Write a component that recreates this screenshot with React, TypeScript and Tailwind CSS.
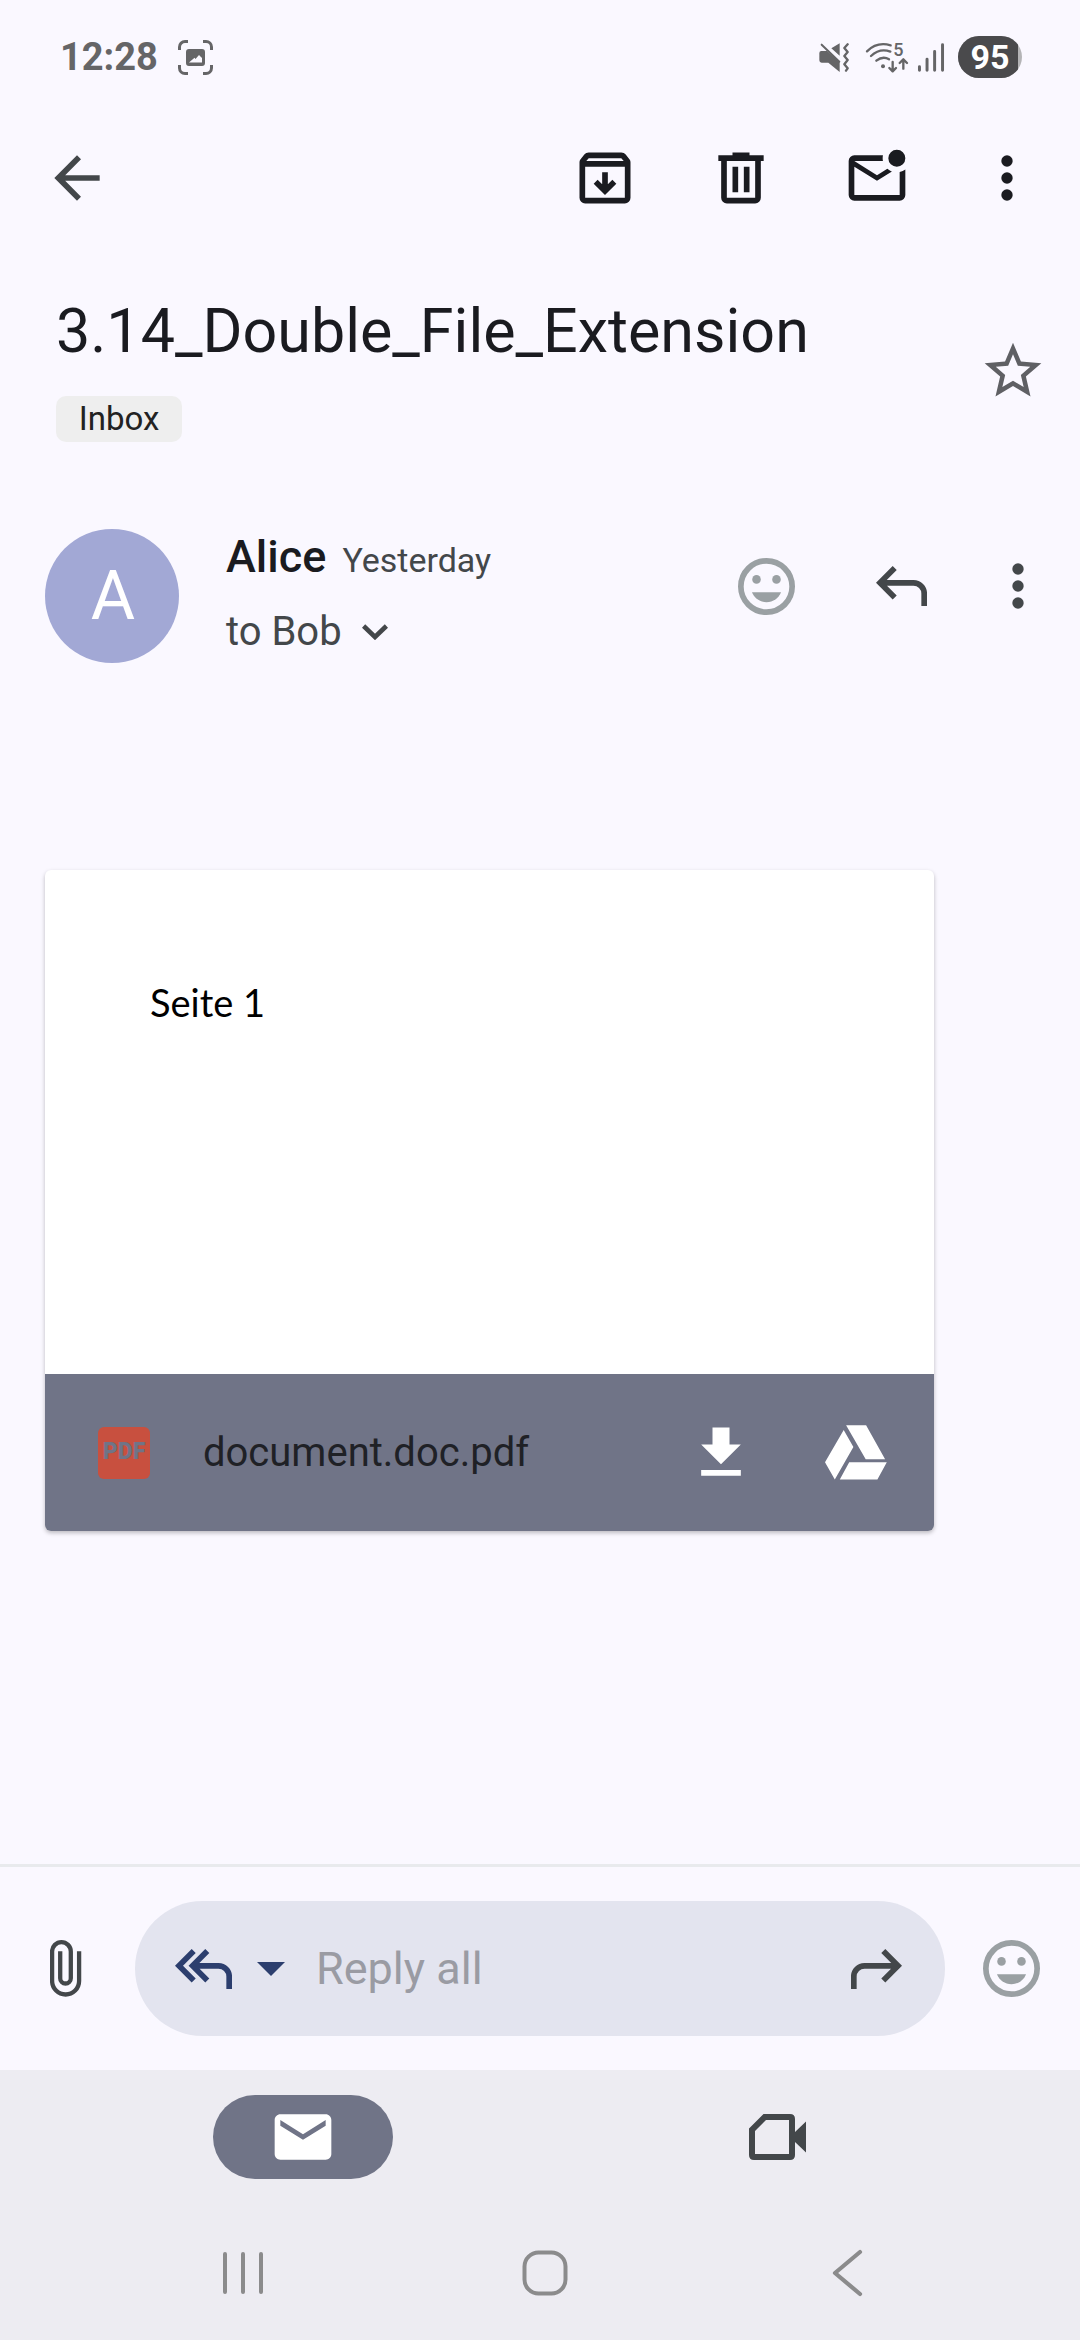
import React from "react";

type IconProps = { className?: string };

function Glyph({ d, className = "size-[68px]" }: { d: string; className?: string }) {
  return (
    <svg viewBox="0 0 24 24" fill="currentColor" className={className} aria-hidden="true">
      <path d={d} />
    </svg>
  );
}

const ARROW_BACK = "M20 11H7.83l5.59-5.59L12 4l-8 8 8 8 1.41-1.41L7.83 13H20v-2z";
const ARCHIVE =
  "M12 18l4-4-1.4-1.4-1.6 1.6V10h-2v4.2l-1.6-1.6L8 14l4 4ZM5 8v11h14V8H5ZM5 21q-.825 0-1.413-.588T3 19V6.525q0-.35.113-.675t.337-.6L4.7 3.725q.275-.35.687-.538T6.25 3h11.5q.45 0 .863.188t.687.537l1.25 1.525q.225.275.337.6t.113.675V19q0 .825-.588 1.413T19 21H5ZM5.4 6h13.2l-.85-1H6.25L5.4 6Z";
const TRASH =
  "M7 21q-.825 0-1.412-.587Q5 19.825 5 19V6H4V4h5V3h6v1h5v2h-1v13q0 .825-.587 1.413Q17.825 21 17 21ZM17 6H7v13h10ZM9 17h2V8H9Zm4 0h2V8h-2Z";
const MAIL_UNREAD =
  "M4 20q-.825 0-1.413-.588T2 18V6q0-.825.588-1.413T4 4h10.1q-.1.5-.1 1t.1 1H4l8 5 3.65-2.275q.35.325.763.563.412.237.862.412L12 13 4 8v10h16V9.9q.575-.125 1.075-.35T22 9v9q0 .825-.588 1.413T20 20H4ZM19 8q-1.25 0-2.125-.875T16 5q0-1.25.875-2.125T19 2q1.25 0 2.125.875T22 5q0 1.25-.875 2.125T19 8Z";
const STAR =
  "M22 9.24l-7.19-.62L12 2 9.19 8.63 2 9.24l5.46 4.73L5.82 21 12 17.27 18.18 21l-1.63-7.03L22 9.24zM12 15.4l-3.76 2.27 1-4.28-3.32-2.88 4.38-.38L12 6.1l1.71 4.04 4.38.38-3.32 2.88 1 4.28L12 15.4z";
const DOWNLOAD = "M19 9h-4V3H9v6H5l7 7 7-7zM5 18v2h14v-2H5z";
const MAIL = "M20 4H4c-1.1 0-2 .9-2 2v12c0 1.1.9 2 2 2h16c1.1 0 2-.9 2-2V6c0-1.1-.9-2-2-2zm0 4l-8 5-8-5V6l8 5 8-5v2z";

function Dots() {
  return (
    <svg viewBox="8 0 8 24" fill="currentColor" className="h-[68px] w-6" aria-hidden="true">
      <circle cx="12" cy="6" r="2" />
      <circle cx="12" cy="12" r="2" />
      <circle cx="12" cy="18" r="2" />
    </svg>
  );
}

function Smiley() {
  return (
    <svg viewBox="2 2 20 20" fill="currentColor" className="size-[57px] text-[#9aa0a3]" aria-hidden="true">
      <circle cx="12" cy="12" r="9" fill="none" stroke="currentColor" strokeWidth="2" />
      <circle cx="8.5" cy="9.5" r="1.5" />
      <circle cx="15.5" cy="9.5" r="1.5" />
      <path d="M12 17.5c2.33 0 4.31-1.46 5.11-3.5H6.89c.8 2.04 2.78 3.5 5.11 3.5z" />
    </svg>
  );
}

function ReplyArrow({ className = "" }: IconProps) {
  return (
    <svg viewBox="0 0 51 40" fill="none" stroke="currentColor" strokeWidth="5.7" className={`h-10 w-[51px] ${className}`} aria-hidden="true">
      <path d="M18.7 2 4 16.8l14.7 14.7M4 16.8h33.5a10.7 10.7 0 0 1 10.7 10.7V40" />
    </svg>
  );
}

function ReplyAllArrow() {
  return (
    <svg viewBox="0 0 57 40" fill="none" stroke="currentColor" strokeWidth="5.7" className="h-10 w-[57px]" aria-hidden="true">
      <path d="M18.7 2 4 16.8l14.7 14.7M32.3 2 17.6 16.8l14.7 14.7M17.6 16.8h25.9a10.7 10.7 0 0 1 10.7 10.7V40" />
    </svg>
  );
}

function CaptureIcon() {
  return (
    <svg viewBox="0 0 35 35" fill="none" stroke="currentColor" strokeWidth="3" className="size-[35px]" aria-hidden="true">
      <path d="M1.5 10V7a5.5 5.5 0 0 1 5.5-5.5h3M25 1.5h3a5.5 5.5 0 0 1 5.5 5.5v3M33.5 25v3a5.5 5.5 0 0 1-5.5 5.5h-3M10 33.5H7A5.5 5.5 0 0 1 1.5 28v-3" />
      <path
        fill="currentColor"
        stroke="none"
        fillRule="evenodd"
        d="M11 9h13a3 3 0 0 1 3 3v11a3 3 0 0 1-3 3H11a3 3 0 0 1-3-3V12a3 3 0 0 1 3-3ZM11 22.5h13V18l-3-3-3.5 4-1-1.2Z"
      />
    </svg>
  );
}

function MuteIcon() {
  return (
    <svg viewBox="38 52 90 87" fill="none" className="h-[29px] w-[30px]" aria-hidden="true">
      <path fill="currentColor" d="M45 76h17l38 33v30L66 111H46q-7 0-7-7V82q0-6 6-6ZM100 53v37L75 68Z" />
      <path stroke="currentColor" strokeWidth="6" strokeLinecap="round" d="m46 57 53 51" />
      <path stroke="currentColor" strokeWidth="7" strokeLinecap="round" strokeLinejoin="round" d="m124 56-10 11 10 12-10 12 10 12-10 13 10 12-5 7" />
    </svg>
  );
}

function WifiIcon() {
  return (
    <svg viewBox="174 51 132 93" fill="none" stroke="currentColor" strokeWidth="7" strokeLinecap="round" strokeLinejoin="round" className="h-[31px] w-11 overflow-visible" aria-hidden="true">
      <path d="M180 79q30-30 71-18M192 93q27-25 58-13M208 107q20-15 38-4" />
      <circle cx="228" cy="124" r="6" fill="currentColor" stroke="none" />
      <path d="M257 111v27m-10-9 10 10 10-10M289 131v-27m-11 10 11-11 11 11" />
      <text x="259" y="93" fontSize="54" fontFamily="Roboto" fontWeight="500" fill="currentColor" stroke="none">
        5
      </text>
    </svg>
  );
}

function SignalIcon() {
  return (
    <svg viewBox="332 50 84 88" fill="none" stroke="currentColor" strokeWidth="9" strokeLinecap="round" className="h-[29px] w-7" aria-hidden="true">
      <path d="M339 122v11M362 99v34M385 76v57M409 55v78" />
    </svg>
  );
}

function Paperclip() {
  return (
    <svg viewBox="0 0 32 57" fill="none" stroke="currentColor" strokeWidth="4.3" className="h-[57px] w-8" aria-hidden="true">
      <path d="M29.1 11.3V41a13.5 13.5 0 0 1-27 0V11.5a9.35 9.35 0 0 1 18.7 0v26.7a5.3 5.3 0 0 1-10.6 0V11.3" />
    </svg>
  );
}

function DriveIcon() {
  return (
    <svg viewBox="0 0 62 55" fill="currentColor" className="h-[55px] w-[62px]" aria-hidden="true">
      <path d="M21.1.3h20l19 34H40.7ZM18.7 5l9.7 17L9.8 54.5 0 37.3ZM24.2 37.3h37.6l-9.4 17.2H14.8Z" />
    </svg>
  );
}

function VideoIcon() {
  return (
    <svg viewBox="0 0 57 46" fill="currentColor" fillRule="evenodd" className="h-[46px] w-[57px]" aria-hidden="true">
      <path d="M14.5 0H41q5 0 5 5v13L57 7.5v31L46 28v13q0 5-5 5H5q-5 0-5-5V14.5ZM17 6 6 17v23h34V6Z" />
    </svg>
  );
}

function StatusBar() {
  return (
    <div className="flex h-[114px] items-center justify-between pr-[58px] pl-[60px] text-[#656567]">
      <div className="flex items-center gap-5">
        <time className="text-[38px] font-bold">12:28</time>
        <CaptureIcon />
      </div>
      <div className="flex items-center">
        <MuteIcon />
        <span className="ml-4">
          <WifiIcon />
        </span>
        <span className="ml-2">
          <SignalIcon />
        </span>
        <span className="ml-[13px] flex h-[42px] w-16 overflow-hidden rounded-full bg-[#b4b4b6]">
          <span className="flex w-[60px] items-center justify-center bg-[#4a4a4c] pl-1 text-[34px] font-bold text-white">95</span>
        </span>
      </div>
    </div>
  );
}

export default function App() {
  return (
    <div className="flex min-h-screen flex-col bg-[#faf8ff] font-[Roboto,sans-serif] text-[#1a1b20]">
      <StatusBar />

      <header className="flex h-32 items-center justify-between pr-[45px] pl-[43px]">
        <button aria-label="Back" className="text-[#43474a]">
          <Glyph d={ARROW_BACK} />
        </button>
        <div className="flex items-center gap-[68px]">
          <button aria-label="Archive">
            <Glyph d={ARCHIVE} />
          </button>
          <button aria-label="Delete">
            <Glyph d={TRASH} />
          </button>
          <button aria-label="Mark as unread">
            <Glyph d={MAIL_UNREAD} />
          </button>
          <button aria-label="More options" className="flex w-14 justify-center">
            <Dots />
          </button>
        </div>
      </header>

      <main className="flex flex-1 flex-col">
        <section className="mt-[53px] flex items-center justify-between pr-[33px] pl-14">
          <div>
            <h1 className="text-[61px] leading-[72px]">3.14_Double_File_Extension</h1>
            <span className="mt-[29px] flex h-[46px] w-[126px] items-center justify-center rounded-[10px] bg-[#eeeeee] text-[33px] text-[#222222]">
              Inbox
            </span>
          </div>
          <button aria-label="Star" className="pt-1 text-[#5f6064]">
            <Glyph d={STAR} />
          </button>
        </section>

        <section className="mt-[87px] flex items-start pr-[46px] pl-[45px]">
          <div className="flex size-[134px] items-center justify-center rounded-full bg-[#a2a8d5] pl-0.5 text-[68px] text-white">A</div>
          <div className="ml-[47px] flex flex-1 flex-col gap-5">
            <div className="flex items-baseline gap-4 leading-[56px]">
              <span className="text-[45px] font-medium">Alice</span>
              <span className="text-[34px] text-[#43474a]">Yesterday</span>
            </div>
            <button className="flex items-center gap-5 text-[40px] leading-[48px] text-[#43474a]">
              to Bob
              <svg viewBox="0 0 26 16" fill="none" stroke="currentColor" strokeWidth="4.6" className="h-4 w-[26px]" aria-hidden="true">
                <path d="m1.6 2 11.4 11L24.4 2" />
              </svg>
            </button>
          </div>
          <div className="flex h-[114px] items-center gap-[67px] text-[#43474a]">
            <button aria-label="Add reaction" className="flex w-[68px] justify-center">
              <Smiley />
            </button>
            <button aria-label="Reply" className="flex w-[68px] justify-center">
              <ReplyArrow />
            </button>
            <button aria-label="More message options" className="flex w-8 justify-center">
              <Dots />
            </button>
          </div>
        </section>

        <article className="mt-[207px] mr-[146px] ml-[45px] overflow-hidden rounded-md bg-white shadow-[0_2px_4px_rgba(0,0,0,0.25)]">
          <div className="h-[504px] pt-[110px] pl-[105px] font-[Lato,sans-serif] text-[38px] leading-[44px] text-black">Seite 1</div>
          <div className="flex h-[157px] items-center bg-[#707487] pr-[47px] pl-[53px]">
            <span className="flex size-[52px] items-center justify-center rounded-md bg-[#c8503f] text-[23px] font-black text-[#707487]">PDF</span>
            <span className="ml-[53px] flex-1 text-[40px] text-[#1f2126]">document.doc.pdf</span>
            <div className="flex items-center gap-[70px] text-white">
              <button aria-label="Download">
                <Glyph d={DOWNLOAD} />
              </button>
              <button aria-label="Save to Drive">
                <DriveIcon />
              </button>
            </div>
          </div>
        </article>
      </main>

      <form className="flex items-center border-t-[3px] border-[#e8eaed] py-[34px] pr-10 pl-[50px] text-[#43474a]">
        <button type="button" aria-label="Attach file">
          <Paperclip />
        </button>
        <div className="mr-[38px] ml-[53px] flex h-[135px] min-w-0 flex-1 items-center rounded-full bg-[#e3e4ef] pr-[43px] pl-10">
          <button type="button" aria-label="Reply type" className="flex items-center gap-[25px] text-[#2c3e6e]">
            <ReplyAllArrow />
            <svg viewBox="0 0 28 14" fill="currentColor" className="h-3.5 w-7" aria-hidden="true">
              <path d="M0 0h28L14 14Z" />
            </svg>
          </button>
          <input
            type="text"
            aria-label="Reply all"
            placeholder="Reply all"
            className="ml-[31px] min-w-0 flex-1 bg-transparent text-[45px] outline-none placeholder:text-[#9a9ba3]"
          />
          <button type="button" aria-label="Forward">
            <ReplyArrow className="-scale-x-100" />
          </button>
        </div>
        <button type="button" aria-label="Insert emoji">
          <Smiley />
        </button>
      </form>

      <footer className="bg-[#edecf2]">
        <nav className="grid h-[136px] grid-cols-2 justify-items-center px-[66px] pt-[25px]">
          <button aria-label="Mail" className="flex h-[84px] w-[180px] items-center justify-center rounded-full bg-[#707487] text-white">
            <Glyph d={MAIL} />
          </button>
          <button aria-label="Meet" className="flex h-[84px] w-[180px] items-center justify-center text-[#43474a]">
            <VideoIcon />
          </button>
        </nav>
        <nav className="grid h-[134px] grid-cols-3 items-center justify-items-center pr-[81px] pl-[92px] text-[#8b8b8c]">
          <button aria-label="Recent apps">
            <svg viewBox="0 0 48 48" fill="none" stroke="currentColor" strokeWidth="4" strokeLinecap="round" className="size-12" aria-hidden="true">
              <path d="M6 5v38M24 5v38M42 5v38" />
            </svg>
          </button>
          <button aria-label="Home">
            <svg viewBox="0 0 48 48" fill="none" stroke="currentColor" strokeWidth="4" className="size-12" aria-hidden="true">
              <rect x="3.5" y="3.5" width="41" height="41" rx="14" />
            </svg>
          </button>
          <button aria-label="Go back">
            <svg viewBox="0 0 48 48" fill="none" stroke="currentColor" strokeWidth="4.2" strokeLinecap="round" strokeLinejoin="round" className="size-12" aria-hidden="true">
              <path d="M36 3 11 24l25 21" />
            </svg>
          </button>
        </nav>
      </footer>
    </div>
  );
}
